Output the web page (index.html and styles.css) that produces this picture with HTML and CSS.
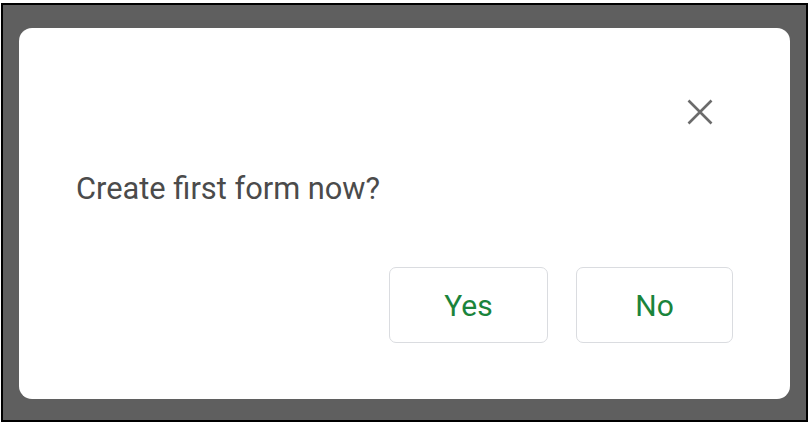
FILE: index.html
```html
<!DOCTYPE html>
<html>
<head>
<meta charset="utf-8">
<link rel="stylesheet" href="styles.css">
</head>
<body>
<div class="frame">
  <div class="card">
    <div class="header">
      <button class="close" aria-label="Close">
        <svg width="26" height="26" viewBox="0 0 26 26"><path d="M1.5 1.5L24.5 24.5M24.5 1.5L1.5 24.5" stroke="#6b6b6b" stroke-width="2.6" fill="none"/></svg>
      </button>
    </div>
    <p class="question">Create first form now?</p>
    <div class="actions">
      <button class="btn btn-yes">Yes</button>
      <button class="btn btn-no">No</button>
    </div>
  </div>
</div>
</body>
</html>
```
FILE: styles.css
```css
html, body {
  margin: 0;
  padding: 0;
  background: #ffffff;
}
.frame {
  box-sizing: border-box;
  margin: 3px 0 0 1px;
  width: 807px;
  height: 419px;
  border: 2px solid #000;
  background: #5f5f5f;
  padding: 23px 16px 21px 16px;
}
.card {
  box-sizing: border-box;
  height: 100%;
  background: #fff;
  border-radius: 13px;
  padding: 60px 57px 56px 57px;
  display: flex;
  flex-direction: column;
  font-family: Roboto, "Liberation Sans", sans-serif;
}
.header {
  display: flex;
  justify-content: flex-end;
  height: 48px;
}
.close {
  width: 48px;
  height: 48px;
  margin-right: 9px;
  border: 0;
  background: transparent;
  padding: 0;
  display: flex;
  align-items: center;
  justify-content: center;
}
.question {
  margin: 35px 0 0 0;
  font-size: 30.8px;
  line-height: 36px;
  color: #4b4b4b;
}
.actions {
  margin-top: auto;
  display: flex;
  justify-content: flex-end;
  gap: 28px;
}
.btn {
  box-sizing: border-box;
  height: 76px;
  border: 1px solid #dadce0;
  border-radius: 7px;
  background: #fff;
  color: #1a843b;
  font-family: Roboto, "Liberation Sans", sans-serif;
  font-size: 30px;
  font-weight: 400;
}
.btn-yes { width: 159px; }
.btn-no { width: 157px; }
```
